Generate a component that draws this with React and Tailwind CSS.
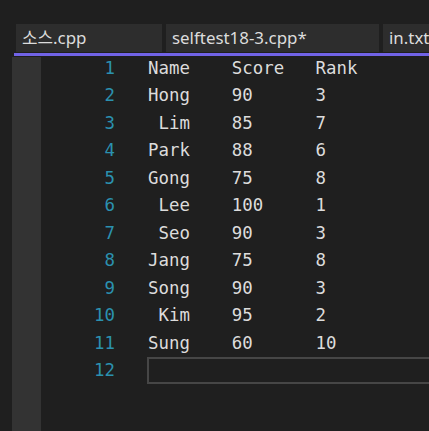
const tabs = [
  { name: '소스.cpp', w: 'w-[146px]' },
  { name: 'selftest18-3.cpp*', w: 'w-[213px]' },
  { name: 'in.txt', w: 'w-[80px]' },
]

const lines = [
  'Name\tScore\tRank',
  'Hong\t90\t3',
  ' Lim\t85\t7',
  'Park\t88\t6',
  'Gong\t75\t8',
  ' Lee\t100\t1',
  ' Seo\t90\t3',
  'Jang\t75\t8',
  'Song\t90\t3',
  ' Kim\t95\t2',
  'Sung\t60\t10',
  '',
]

export default function App() {
  return (
    <div className="w-[429px] h-[431px] bg-[#1f1f1f] overflow-hidden flex flex-col">
      {/* Tabs */}
      <div className="pt-[24px] pl-[16px] flex gap-[4px] flex-shrink-0">
        {tabs.map(t => (
          <div key={t.name}
            className={`${t.w} h-[28px] flex-shrink-0 bg-[#2d2d2d] pl-[6px] flex items-center text-[16.9px] text-[#dcdcdc] whitespace-nowrap overflow-hidden`}
            style={{ fontFamily: '"Noto Sans", "Noto Sans CJK KR", sans-serif' }}>
            {t.name}
          </div>
        ))}
      </div>
      <div className="mt-[1px] ml-[14px] h-[3px] bg-[#7163e6] flex-shrink-0" />

      {/* Editor */}
      <div className="flex flex-1 pt-[1px]">
        <div className="ml-[12px] w-[29px] bg-[#333333] flex-shrink-0" />
        <div className="-mt-[2px] flex flex-1 text-[17.4px] leading-[27.45px]"
          style={{ fontFamily: '"DejaVu Sans Mono", monospace' }}>
          <div className="w-[74px] flex-shrink-0 text-right text-[#2b91af]">
            {lines.map((_, i) => <div key={i}>{i + 1}</div>)}
          </div>
          <div className="ml-[33px] flex-1 text-[#dcdcdc] whitespace-pre [tab-size:8]">
            {lines.map((l, i) => (
              i === lines.length - 1
                ? <div key={i} className="h-[27px] -ml-[1px] -mr-[20px] border-2 border-[#464646]"></div>
                : <div key={i}>{l}</div>
            ))}
          </div>
        </div>
      </div>
    </div>
  )
}
